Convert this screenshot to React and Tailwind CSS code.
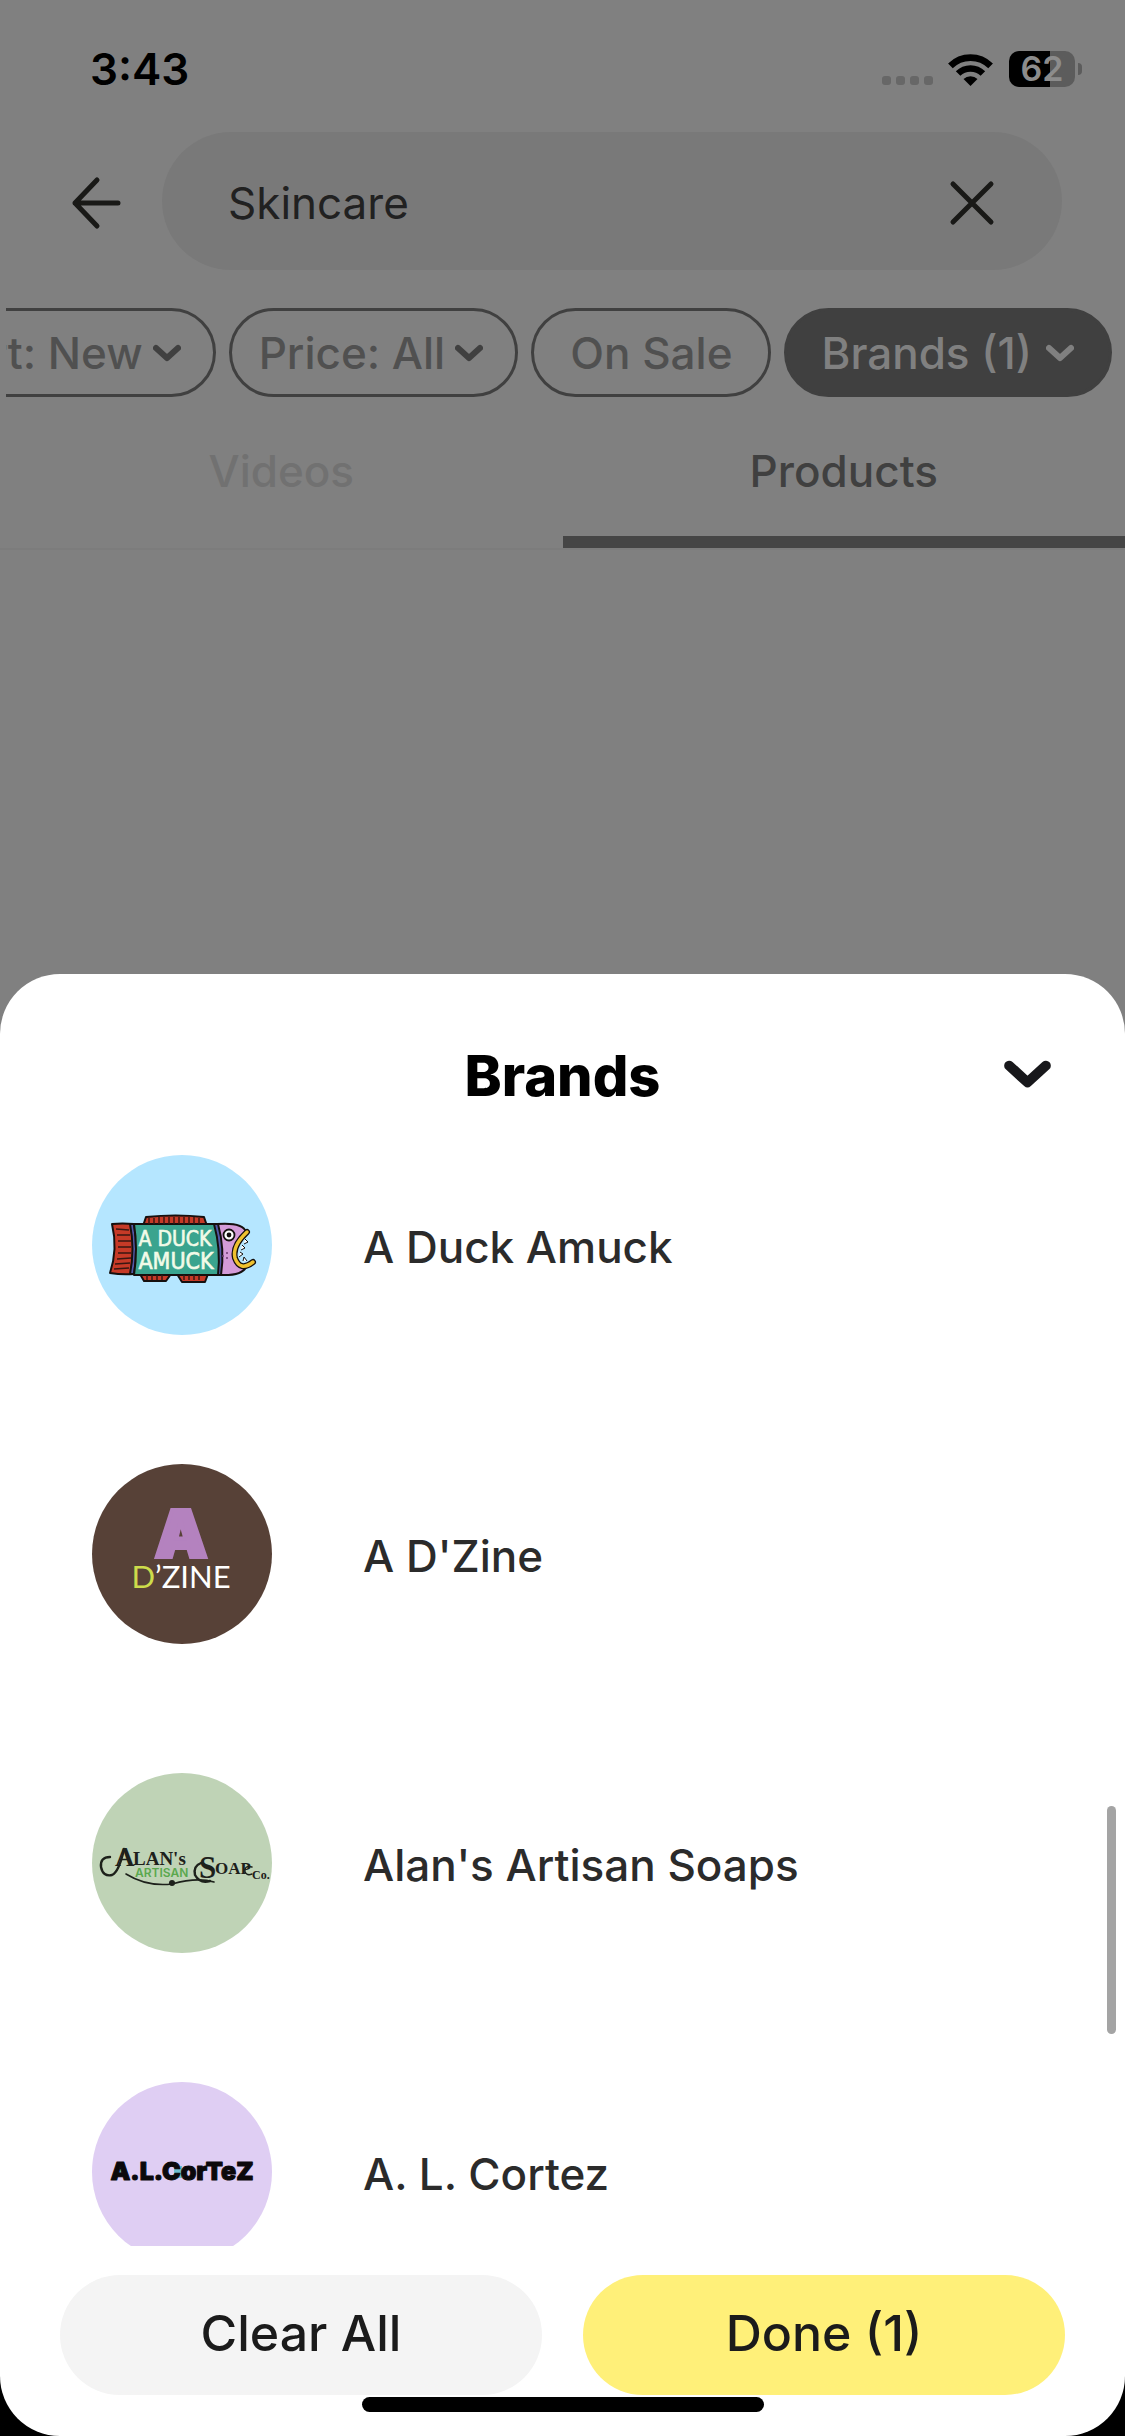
import { useState } from 'react';

const filters = [
  { label: 'Sort: New', arrow: true },
  { label: 'Price: All', arrow: true },
  { label: 'On Sale', arrow: false },
  { label: 'Brands (1)', arrow: true, active: true },
];

const brands = [
  { name: 'A Duck Amuck', Logo: DuckLogo },
  { name: "A D'Zine", Logo: DzineLogo },
  { name: "Alan's Artisan Soaps", Logo: AlanLogo },
  { name: 'A. L. Cortez', Logo: CortezLogo },
];

function Chevron({ className }) {
  return (
    <svg viewBox="0 0 28 18" className={className} fill="none" stroke="currentColor" strokeWidth="6" strokeLinecap="round" strokeLinejoin="round">
      <path d="M3 4 L14 14 L25 4" />
    </svg>
  );
}

function DuckLogo() {
  return (
    <svg viewBox="0 0 180 180" className="size-full">
      <rect width="180" height="180" fill="#b5e6ff" />
      <g stroke="#15100f" strokeWidth="2" strokeLinejoin="round">
        <path d="M51 71 L54 62 Q84 59 112 62 L115 71 Z" fill="#c63a27" />
        <path d="M48 119 L52 126 H74 L79 119 Z" fill="#c63a27" />
        <path d="M85 119 L90 127 H113 L116 119 Z" fill="#c63a27" />
        <path d="M20 69 Q30 68 42 69 Q46 94 42 119 Q30 120 18 118 Q26 94 20 69 Z" fill="#c63a27" />
        <path d="M38 69 H42 Q46 94 42 119 H38 Q43 94 38 69 Z" fill="#5359a8" />
        <path d="M125 69 Q151 67 154 77 Q140 93 145 105 Q148 110 154 112 Q150 121 128 120 Q131 94 125 69 Z" fill="#d49bd8" />
        <path d="M42 69 H124 Q131 94 127 120 H42 Q46 94 42 69 Z" fill="#3aa48e" />
        <path d="M122 69 H126 Q133 94 129 120 H126 Q129 94 122 69 Z" fill="#5359a8" />
      </g>
      <path
        d="M57 63 V69 M62 63 V69 M67 62 V69 M72 62 V69 M77 62 V69 M82 62 V69 M87 62 V69 M92 62 V69 M97 62 V69 M102 62 V69 M107 63 V69 M55 120 V125 M60 120 V125 M65 120 V125 M70 120 V125 M92 120 V125 M97 120 V125 M102 120 V125 M107 120 V125 M24 74 L37 75 M25 80 L38 80 M26 86 H39 M26 92 H39 M26 98 H39 M25 104 L39 103 M23 109 L38 108 M22 114 L37 113"
        stroke="#3a1712"
        strokeWidth="1.5"
      />
      <path d="M155 77 Q140 91 143 103 Q148 117 161 107" fill="none" stroke="#15100f" strokeWidth="6" strokeLinecap="round" />
      <path d="M155 77 Q140 91 143 103 Q148 117 161 107" fill="none" stroke="#efc12f" strokeWidth="3.5" strokeLinecap="round" />
      <path d="M153 84 l3 3 l-4 2 M150 90 l3 3 l-4 2 M148 97 l3 2 l-4 3 M151 106 l1 -4 l3 4" fill="#fff" stroke="#15100f" strokeWidth="1" />
      <circle cx="137" cy="80" r="5.5" fill="#fff" stroke="#15100f" strokeWidth="1.8" />
      <circle cx="137" cy="80" r="2.4" fill="#15100f" />
      <circle cx="131" cy="101" r="1" fill="#6e3a72" />
      <circle cx="135" cy="98" r="1" fill="#6e3a72" />
      <circle cx="135" cy="103" r="1" fill="#6e3a72" />
      <g fill="#f2fbe8" stroke="#f2fbe8" strokeWidth="0.6" fontFamily="'DejaVu Sans Condensed', sans-serif" textAnchor="middle">
        <text x="83" y="91" fontSize="21">A DUCK</text>
        <text x="84" y="114" fontSize="23">AMUCK</text>
      </g>
    </svg>
  );
}

function DzineLogo() {
  return (
    <svg viewBox="0 0 180 180" className="size-full">
      <rect width="180" height="180" fill="#574137" />
      <text x="89" y="93" fill="#b482bf" stroke="#b482bf" strokeWidth="4" fontSize="65" fontWeight="900" fontFamily="Inter, sans-serif" textAnchor="middle">A</text>
      <text x="89" y="124" fontSize="31" fontFamily="Lato, sans-serif" textAnchor="middle" fill="#fff">
        <tspan fill="#cddc4b">D</tspan>’ZINE
      </text>
    </svg>
  );
}

function AlanLogo() {
  return (
    <svg viewBox="0 0 180 180" className="size-full">
      <rect width="180" height="180" fill="#bfd3b6" />
      <g fill="none" stroke="#1d211b" strokeLinecap="round">
        <path d="M18 84 Q8 84 9 94 Q11 104 20 102 Q27 99 32 76" strokeWidth="2.4" />
        <path d="M109 90 Q101 93 103 102 Q108 111 118 108" strokeWidth="2.4" />
        <path d="M34 101 Q55 114 80 111 Q105 104 122 109" strokeWidth="1.6" />
        <path d="M160 94 Q152 92 153 99 Q155 103 160 101" strokeWidth="1.4" />
      </g>
      <circle cx="80" cy="110" r="3" fill="#1d211b" />
      <g fill="#1d211b" fontFamily="'Liberation Serif', serif" fontWeight="700">
        <text x="23" y="93" fontSize="27">A</text>
        <text x="41" y="92" fontSize="19">LAN's</text>
        <text x="107" y="105" fontSize="31">S</text>
        <text x="123" y="101" fontSize="17">OAP</text>
        <text x="160" y="106" fontSize="12">Co.</text>
      </g>
      <text x="43" y="104" fill="#5aa84e" fontSize="12" fontWeight="600" fontFamily="Inter, sans-serif">ARTISAN</text>
    </svg>
  );
}

function CortezLogo() {
  return (
    <svg viewBox="0 0 180 180" className="size-full">
      <rect width="180" height="180" fill="#dfcef3" />
      <rect x="24" y="83" width="6" height="8" fill="#70bdd0" />
      <rect x="82" y="84" width="8" height="12" fill="#70bdd0" />
      <text x="90" y="98" fontSize="25" fontWeight="900" fontFamily="Inter, sans-serif" fill="#0b090b" stroke="#0b090b" strokeWidth="1" strokeLinejoin="round" textAnchor="middle">A.L.CorTeZ</text>
    </svg>
  );
}

function StatusBar() {
  return (
    <div className="flex items-center justify-between pt-10 pl-[90px] pr-[43px] text-black">
      <span className="text-[44px] leading-[58px] font-semibold">3:43</span>
      <div className="flex items-center">
        <div className="flex gap-[5px] self-end pb-[2px] mr-[15px]">
          <i className="size-[9px] rounded-[3px] bg-[#676767]" />
          <i className="size-[9px] rounded-[3px] bg-[#676767]" />
          <i className="size-[9px] rounded-[3px] bg-[#676767]" />
          <i className="size-[9px] rounded-[3px] bg-[#676767]" />
        </div>
        <svg viewBox="0 0 45 33" className="w-[45px] h-[33px] mr-[16px]" fill="none" stroke="#000">
          <path d="M2.4 12.9 A28.5 28.5 0 0 1 42.6 12.9" strokeWidth="6.6" />
          <path d="M10.1 20.6 A17.5 17.5 0 0 1 34.9 20.6" strokeWidth="6.4" />
          <path d="M15.5 26 A10 10 0 0 1 29.5 26 L22.5 33 Z" fill="#000" stroke="none" />
        </svg>
        <div className="flex h-9 w-[66px] items-center justify-center rounded-[10px] bg-linear-to-r from-black from-62% to-[#5c5c5c] to-62% text-[34px] leading-9 font-semibold text-[#8c8c8c]">
          62
        </div>
        <i className="ml-[3px] h-3 w-1 rounded-r-full bg-[#5c5c5c]" />
      </div>
    </div>
  );
}

function FilterPill({ label, arrow, active }) {
  const padding = active ? 'pl-[34px] pr-[35px] gap-[14px]' : arrow ? 'pl-[27px] pr-[32px] gap-[10px]' : 'px-[36px]';
  const color = active ? 'bg-[#404040] text-[#808080]' : 'text-[#505050]';

  return (
    <button className={`flex h-[89px] shrink-0 items-center rounded-full border-3 border-[#404040] text-[44px] font-medium ${padding} ${color}`}>
      {label}
      {arrow && <Chevron className={`w-7 h-[18px] ${active ? '' : 'text-[#404040]'}`} />}
    </button>
  );
}

export default function App() {
  const [query, setQuery] = useState('Skincare');
  const [tab, setTab] = useState('Products');

  return (
    <div className="flex h-screen flex-col overflow-hidden bg-[#808080] font-['Inter',sans-serif]">
      <StatusBar />

      <header className="flex items-center pt-[34px] pl-[69px] pr-[63px]">
        <button aria-label="Back" className="mr-[39px] pt-1">
          <svg viewBox="0 0 54 54" className="size-[54px]" fill="none" stroke="#191917" strokeWidth="5" strokeLinecap="round" strokeLinejoin="round">
            <path d="M28 4 L6 27 L28 50 M6 27 H49" />
          </svg>
        </button>
        <div className="flex h-[138px] flex-1 items-center rounded-full bg-[#797979] pt-1 pl-[66px] pr-[66px]">
          <input
            aria-label="Search"
            value={query}
            onChange={(e) => setQuery(e.target.value)}
            className="min-w-0 flex-1 bg-transparent text-[44px] text-[#212121] outline-none"
          />
          <button aria-label="Clear search" onClick={() => setQuery('')}>
            <svg viewBox="0 0 48 48" className="size-12" fill="none" stroke="#191917" strokeWidth="5" strokeLinecap="round">
              <path d="M5 5 L43 43 M43 5 L5 43" />
            </svg>
          </button>
        </div>
      </header>

      <div className="mt-[38px] ml-[6px] mr-[13px] flex justify-end gap-[13px] overflow-hidden">
        {filters.map((f) => (
          <FilterPill key={f.label} {...f} />
        ))}
      </div>

      <div role="tablist" className="flex border-b-2 border-[#7c7c7c]">
        {['Videos', 'Products'].map((t) => (
          <button
            key={t}
            role="tab"
            aria-selected={tab === t}
            onClick={() => setTab(t)}
            className={`flex-1 basis-0 border-b-12 pt-[44px] pb-[35px] text-[44px] leading-[60px] font-medium ${tab === t ? 'border-[#454545] text-[#404040]' : 'border-transparent text-[#717171]'}`}
          >
            {t}
          </button>
        ))}
      </div>

      <section className="relative mt-auto flex h-[60vh] flex-col">
        <div className="grid grid-cols-[1fr_auto_1fr] items-center rounded-t-[60px] bg-white px-[74px] pt-[62px] pb-[29px]">
          <h2 className="col-start-2 text-[56px] leading-20 font-extrabold text-black">Brands</h2>
          <button aria-label="Close brands" className="justify-self-end pb-1">
            <Chevron className="w-[47px] h-[30px] text-[#18181b]" />
          </button>
        </div>

        <ul className="flex min-h-0 flex-1 flex-col gap-[129px] overflow-y-auto bg-white pt-[10px] pl-[92px] [scrollbar-width:none]">
          {brands.map(({ name, Logo }) => (
            <li key={name}>
              <button className="flex items-center gap-[91px] text-left">
                <span className="size-[180px] shrink-0 overflow-hidden rounded-full">
                  <Logo />
                </span>
                <span className="pt-1 text-[44px] font-medium text-[#2b2b2b]">{name}</span>
              </button>
            </li>
          ))}
        </ul>
        <div className="absolute right-[9px] top-[832px] h-[228px] w-[9px] rounded-full bg-[#a4a4a4]" />

        <div className="bg-black">
          <div className="rounded-b-[60px] bg-white px-[60px] pt-[29px] pb-6">
            <div className="flex gap-[41px]">
              <button className="h-[120px] flex-1 rounded-full bg-[#f4f4f4] pb-1 text-[50px] font-medium text-[#1b1b1b]">Clear All</button>
              <button className="h-[120px] flex-1 rounded-full bg-[#fff079] pb-1 text-[50px] font-medium text-[#1b1b1b]">Done (1)</button>
            </div>
            <div className="mx-auto mt-[2px] h-[15px] w-[402px] rounded-full bg-black" />
          </div>
        </div>
      </section>
    </div>
  );
}
